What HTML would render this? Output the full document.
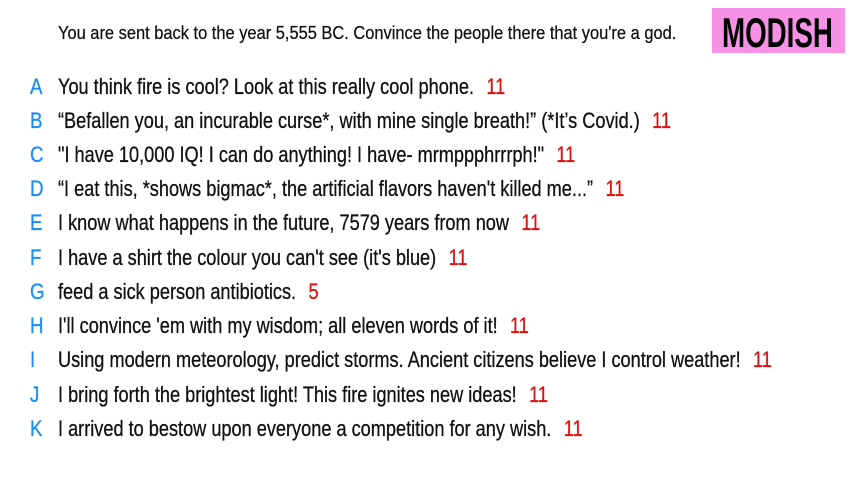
<!DOCTYPE html>
<html><head><meta charset="utf-8"><style>
html,body{margin:0;padding:0;background:#fff;width:853px;height:480px;overflow:hidden;position:relative;font-family:"Liberation Sans",sans-serif;color:#111;}
.hdr{position:absolute;left:58px;top:22px;font-size:18px;line-height:22px;white-space:nowrap;transform:scaleX(0.913);transform-origin:0 0;-webkit-text-stroke:0.25px #111;}
.badge{position:absolute;left:712px;top:8px;width:133px;height:45px;background:#f592e6;}
.badge span{position:absolute;left:10px;top:5px;font-size:42px;line-height:40px;color:#000;font-weight:bold;transform:scaleX(0.66);transform-origin:0 0;white-space:nowrap;}
.row{position:absolute;left:0;height:30px;font-size:22px;line-height:30px;white-space:nowrap;-webkit-text-stroke:0.3px currentColor;}
.row .l{position:absolute;left:30px;color:#1a8ef0;transform:scaleX(0.85);transform-origin:0 0;}
.row .t{position:absolute;left:58px;transform:scaleX(0.825);transform-origin:0 0;}
.n{color:#e01010;margin-left:15px;}
</style></head><body>
<div class="hdr">You are sent back to the year 5,555 BC. Convince the people there that you're a god.</div>
<div class="badge"><span>MODISH</span></div>
<div class="row" style="top:72px"><span class="l">A</span><span class="t">You think fire is cool? Look at this really cool phone.<span class="n">11</span></span></div>
<div class="row" style="top:106px"><span class="l">B</span><span class="t">“Befallen you, an incurable curse*, with mine single breath!” (*It’s Covid.)<span class="n">11</span></span></div>
<div class="row" style="top:140px"><span class="l">C</span><span class="t">"I have 10,000 IQ! I can do anything! I have- mrmppphrrrph!"<span class="n">11</span></span></div>
<div class="row" style="top:174px"><span class="l">D</span><span class="t">“I eat this, *shows bigmac*, the artificial flavors haven't killed me...”<span class="n">11</span></span></div>
<div class="row" style="top:208px"><span class="l">E</span><span class="t">I know what happens in the future, 7579 years from now<span class="n">11</span></span></div>
<div class="row" style="top:243px"><span class="l">F</span><span class="t">I have a shirt the colour you can't see (it's blue)<span class="n">11</span></span></div>
<div class="row" style="top:277px"><span class="l">G</span><span class="t">feed a sick person antibiotics.<span class="n">5</span></span></div>
<div class="row" style="top:311px"><span class="l">H</span><span class="t">I'll convince 'em with my wisdom; all eleven words of it!<span class="n">11</span></span></div>
<div class="row" style="top:345px"><span class="l">I</span><span class="t">Using modern meteorology, predict storms. Ancient citizens believe I control weather!<span class="n">11</span></span></div>
<div class="row" style="top:380px"><span class="l">J</span><span class="t">I bring forth the brightest light! This fire ignites new ideas!<span class="n">11</span></span></div>
<div class="row" style="top:414px"><span class="l">K</span><span class="t">I arrived to bestow upon everyone a competition for any wish.<span class="n">11</span></span></div>
</body></html>
